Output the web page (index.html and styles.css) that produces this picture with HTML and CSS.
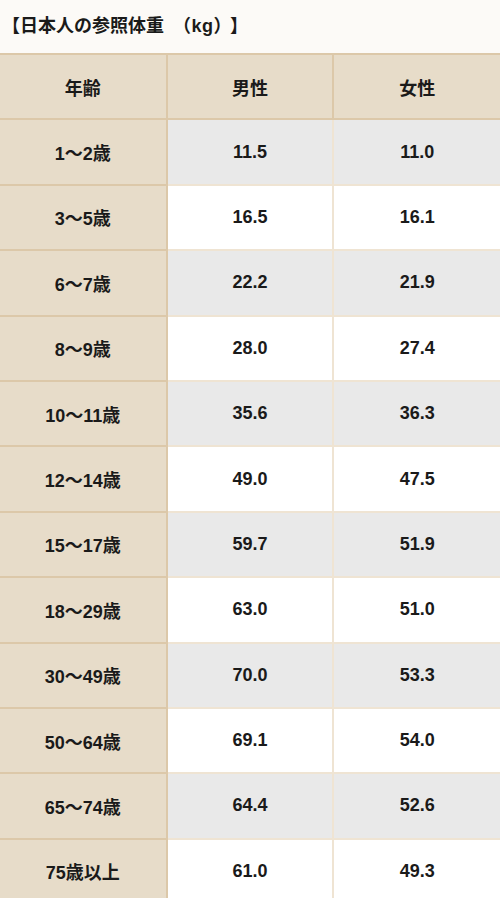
FILE: index.html
```html
<!DOCTYPE html>
<html lang="ja">
<head>
<meta charset="utf-8">
<link rel="stylesheet" href="styles.css">
</head>
<body>
<div class="page">
  <h2 class="title">【日本人の参照体重<span class="unit">（kg）</span>】</h2>
  <table class="weights">
    <thead>
      <tr><th>年齢</th><th>男性</th><th>女性</th></tr>
    </thead>
    <tbody>
      <tr class="alt"><th>1～2歳</th><td>11.5</td><td>11.0</td></tr>
      <tr><th>3～5歳</th><td>16.5</td><td>16.1</td></tr>
      <tr class="alt"><th>6～7歳</th><td>22.2</td><td>21.9</td></tr>
      <tr><th>8～9歳</th><td>28.0</td><td>27.4</td></tr>
      <tr class="alt"><th>10～11歳</th><td>35.6</td><td>36.3</td></tr>
      <tr><th>12～14歳</th><td>49.0</td><td>47.5</td></tr>
      <tr class="alt"><th>15～17歳</th><td>59.7</td><td>51.9</td></tr>
      <tr><th>18～29歳</th><td>63.0</td><td>51.0</td></tr>
      <tr class="alt"><th>30～49歳</th><td>70.0</td><td>53.3</td></tr>
      <tr><th>50～64歳</th><td>69.1</td><td>54.0</td></tr>
      <tr class="alt"><th>65～74歳</th><td>64.4</td><td>52.6</td></tr>
      <tr><th>75歳以上</th><td>61.0</td><td>49.3</td></tr>
    </tbody>
  </table>
</div>
</body>
</html>
```
FILE: styles.css
```css
html, body {
  margin: 0;
  padding: 0;
  background: #fcfaf7;
}
.page {
  width: 500px;
  font-family: "Liberation Sans", Arial, "Noto Sans CJK JP", sans-serif;
  color: #1a1a1a;
}
.title {
  margin: 0;
  height: 53px;
  box-sizing: border-box;
  padding: 13px 0 0 2px;
  font-size: 18px;
  line-height: 26px;
  font-weight: bold;
}
.title .unit {
  margin: 0 7px 0 9px;
  letter-spacing: 0.5px;
}
.weights {
  width: 500px;
  border-collapse: collapse;
  table-layout: fixed;
  background: #fff;
}
.weights th,
.weights td {
  height: 63.4px;
  padding: 0;
  text-align: center;
  vertical-align: middle;
  font-size: 18px;
  font-weight: bold;
  border: 2px solid #efe4d3;
}
.weights thead th,
.weights tbody th {
  background: #e7dcc9;
  border-color: #dcc8a9;
}
.weights tbody tr.alt td {
  background: #e9e9e9;
}
.weights th:first-child { border-left: none; }
.weights th:last-child,
.weights td:last-child { border-right: none; }
```
